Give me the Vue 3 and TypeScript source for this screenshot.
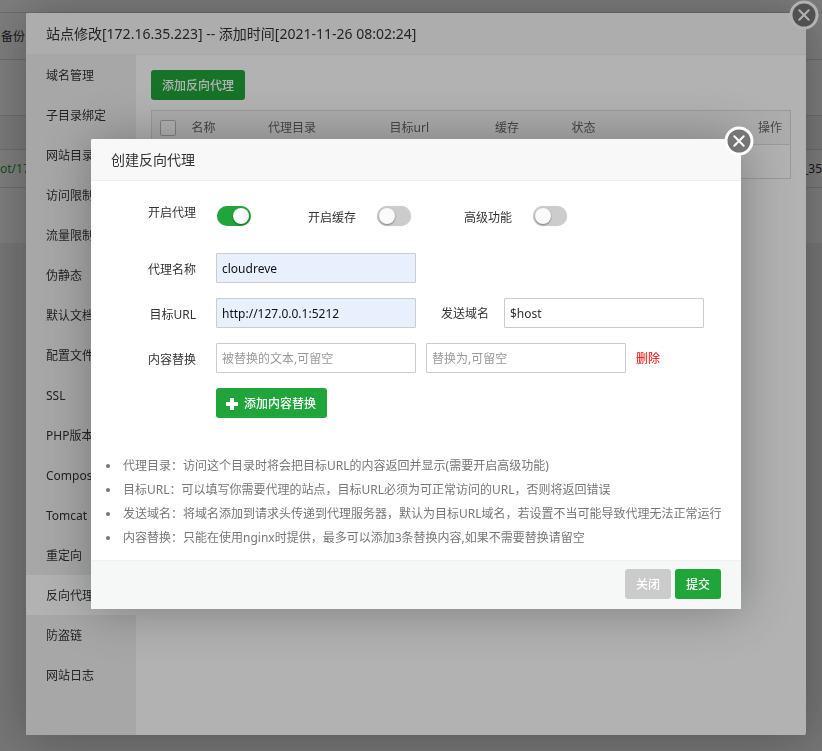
<script setup lang="ts">
import { ref } from 'vue'

const menu = ['域名管理', '子目录绑定', '网站目录', '访问限制', '流量限制', '伪静态', '默认文档', '配置文件', 'SSL', 'PHP版本', 'Composer', 'Tomcat', '重定向', '反向代理', '防盗链', '网站日志']
const active = ref('反向代理')

const enabled = ref(true)
const cache = ref(false)
const advanced = ref(false)
const name = ref('cloudreve')
const target = ref('http://127.0.0.1:5212')
const host = ref('$host')
const replaceFrom = ref('')
const replaceTo = ref('')

const help = [
  '代理目录：访问这个目录时将会把目标URL的内容返回并显示(需要开启高级功能)',
  '目标URL：可以填写你需要代理的站点，目标URL必须为可正常访问的URL，否则将返回错误',
  '发送域名：将域名添加到请求头传递到代理服务器，默认为目标URL域名，若设置不当可能导致代理无法正常运行',
  '内容替换：只能在使用nginx时提供，最多可以添加3条替换内容,如果不需要替换请留空',
]
</script>

<template>
  <div class="page">
    <div class="sheet">
      <div class="row top"></div>
      <div class="row tabs"><span>备份</span></div>
      <div class="row tools"></div>
      <div class="row head"></div>
      <div class="row site"><a href="#">ot/17</a><span>_35</span></div>
      <div class="row rest"></div>
    </div>
  </div>

  <div class="shade outer">
    <section class="dialog site-dialog">
      <h2 class="title">站点修改[172.16.35.223] -- 添加时间[2021-11-26 08:02:24]</h2>
      <button class="close" type="button" aria-label="关闭">
        <svg viewBox="0 0 30 30"><circle cx="15" cy="15" r="13" /><path d="M10.3 10.3l9.4 9.4M19.7 10.3l-9.4 9.4" /></svg>
      </button>
      <div class="split">
        <nav class="menu">
          <a v-for="item in menu" :key="item" href="#" :class="{ on: item === active }" @click.prevent="active = item">{{ item }}</a>
        </nav>
        <div class="content">
          <button class="btn" type="button">添加反向代理</button>
          <table class="list">
            <colgroup>
              <col class="c-check"><col class="c-name"><col class="c-dir"><col class="c-url"><col class="c-cache"><col class="c-state"><col>
            </colgroup>
            <thead>
              <tr>
                <th><input type="checkbox" aria-label="全选"></th>
                <th>名称</th><th>代理目录</th><th>目标url</th><th>缓存</th><th>状态</th><th class="right">操作</th>
              </tr>
            </thead>
            <tbody><tr><td colspan="7"></td></tr></tbody>
          </table>
        </div>
      </div>
    </section>
  </div>

  <div class="shade inner">
    <form class="dialog proxy-dialog" @submit.prevent>
      <h2 class="title">创建反向代理</h2>
      <button class="close" type="button" aria-label="关闭">
        <svg viewBox="0 0 30 30"><circle cx="15" cy="15" r="13" /><path d="M10.3 10.3l9.4 9.4M19.7 10.3l-9.4 9.4" /></svg>
      </button>
      <div class="form">
        <div class="line switches">
          <label class="label raised" for="enabled">开启代理</label>
          <input id="enabled" v-model="enabled" class="switch" type="checkbox">
          <label class="label" for="cache">开启缓存</label>
          <input id="cache" v-model="cache" class="switch" type="checkbox">
          <label class="label near" for="advanced">高级功能</label>
          <input id="advanced" v-model="advanced" class="switch" type="checkbox">
        </div>
        <div class="line">
          <label class="label" for="name">代理名称</label>
          <input id="name" v-model="name" class="text filled" type="text">
        </div>
        <div class="line">
          <label class="label" for="target">目标URL</label>
          <input id="target" v-model="target" class="text filled" type="text">
          <label class="label host" for="host">发送域名</label>
          <input id="host" v-model="host" class="text" type="text">
        </div>
        <div class="line">
          <label class="label" for="from">内容替换</label>
          <input id="from" v-model="replaceFrom" class="text" type="text" placeholder="被替换的文本,可留空">
          <input v-model="replaceTo" class="text second" type="text" placeholder="替换为,可留空" aria-label="替换为">
          <a class="remove" href="#">删除</a>
        </div>
        <div class="line add">
          <button class="btn" type="button">
            <svg viewBox="0 0 12 12"><path d="M6 0v12M0 6h12" /></svg>添加内容替换
          </button>
        </div>
      </div>
      <ul class="help">
        <li v-for="text in help" :key="text">{{ text }}</li>
      </ul>
      <footer class="footer">
        <button class="btn grey" type="button">关闭</button>
        <button class="btn" type="submit">提交</button>
      </footer>
    </form>
  </div>
</template>

<style>
body {
  background: #f0f0f0;
}
#app {
  font: 12px/20px "Noto Sans", "Noto Sans CJK SC", sans-serif;
  color: #333;
}
</style>

<style scoped>
* {
  box-sizing: border-box;
}
a {
  color: inherit;
  text-decoration: none;
}
button,
input {
  font: inherit;
}
.page {
  height: 100vh;
  overflow: hidden;
}
.sheet {
  background: #fff;
}
.row {
  display: flex;
  align-items: center;
  justify-content: space-between;
  border-bottom: 1px solid #ddd;
}
.row.top {
  height: 13px;
}
.row.tabs {
  height: 47px;
  padding: 2px 0 0 1px;
}
.row.tools {
  height: 56px;
}
.row.head {
  height: 34px;
  background: #f6f6f6;
}
.row.site {
  height: 38px;
}
.site a {
  color: #20a53a;
}
.row.rest {
  height: 55px;
  border-bottom: 0;
}
.shade {
  position: fixed;
  inset: 0;
  display: flex;
  justify-content: center;
  background: rgba(0, 0, 0, 0.3);
}
.outer {
  padding: 13px 16px 16px 26px;
}
.inner {
  align-items: center;
  padding: 0 0 3px 10px;
}
.dialog {
  position: relative;
  display: flex;
  flex-direction: column;
  background: #fff;
  border-radius: 2px;
  box-shadow: 1px 1px 50px rgba(0, 0, 0, 0.3);
}
.site-dialog {
  flex: 1;
}
.proxy-dialog {
  width: 650px;
  max-width: 100%;
}
.title {
  flex: none;
  height: 42px;
  margin: 0;
  padding: 0 20px;
  border-bottom: 1px solid #eee;
  border-radius: 2px 2px 0 0;
  background: #f8f8f8;
  font-size: 14px;
  font-weight: 400;
  line-height: 42px;
  white-space: nowrap;
}
.close {
  position: absolute;
  top: -13px;
  right: -13px;
  width: 30px;
  height: 30px;
  padding: 0;
  border: 0;
  background: none;
  cursor: pointer;
}
.close svg {
  display: block;
  fill: #757575;
  stroke: #fff;
  stroke-width: 3;
}
.close path {
  stroke-width: 2;
  stroke-linecap: round;
}
.split {
  flex: 1;
  display: flex;
  min-height: 0;
}
.menu {
  flex: none;
  width: 110px;
  background: #f0f0f0;
}
.menu a {
  display: block;
  padding: 2px 0 0 20px;
  line-height: 38px;
}
.menu a.on {
  background: #fff;
}
.content {
  flex: 1;
  min-width: 0;
  padding: 15px;
}
.btn {
  display: inline-flex;
  align-items: center;
  height: 30px;
  padding: 2px 11px 0 10px;
  border: 0;
  border-radius: 3px;
  background: #20a53a;
  color: #fff;
  font-weight: 500;
  cursor: pointer;
}
.content .btn,
.footer .btn {
  padding: 2px 11px 0;
}
.btn svg {
  width: 12px;
  height: 12px;
  margin-right: 6px;
  stroke: #fff;
  stroke-width: 4;
}
.btn.grey {
  background: #cbcbcb;
}
.list {
  width: 100%;
  margin-top: 10px;
  border: 1px solid #ddd;
  border-collapse: collapse;
  table-layout: fixed;
}
.list th {
  height: 34px;
  padding: 0 8px;
  border-bottom: 1px solid #ddd;
  background: #f6f6f6;
  color: #666;
  font-weight: 400;
  text-align: left;
}
.list td {
  height: 34px;
}
.list .right {
  text-align: right;
}
.list input {
  display: block;
  appearance: none;
  width: 16px;
  height: 16px;
  margin: 0;
  border: 1px solid #bbb;
  border-radius: 2px;
  background: #fff;
}
.c-check {
  width: 5%;
}
.c-name {
  width: 12%;
}
.c-dir {
  width: 19%;
}
.c-url {
  width: 16.5%;
}
.c-cache {
  width: 12%;
}
.c-state {
  width: 15%;
}
.form {
  display: flex;
  flex-direction: column;
  gap: 15px;
  padding: 20px 20px 0 0;
}
.line {
  display: flex;
  align-items: center;
  height: 30px;
}
.switches {
  margin-bottom: 7px;
}
.label {
  flex: none;
  width: 125px;
  padding: 4px 20px 0 0;
  text-align: right;
}
.label.raised {
  margin-bottom: 10px;
}
.label.near {
  width: 121px;
}
.label.host {
  width: 88px;
  padding: 2px 15px 0 0;
}
.switch {
  appearance: none;
  flex: none;
  width: 34px;
  height: 20px;
  margin: 0 0 0 1px;
  padding: 2px;
  border-radius: 10px;
  background: #ccc;
  box-shadow: 0 0 1px #ccc;
}
.switch::before {
  content: "";
  display: block;
  width: 16px;
  height: 16px;
  border-radius: 50%;
  background: #fafafa;
  box-shadow: 0 1px 2px rgba(0, 0, 0, 0.4);
}
.switch:checked {
  background: #20a53a;
}
.switch:checked::before {
  margin-left: 14px;
}
.text {
  flex: 0 1 200px;
  width: 200px;
  min-width: 0;
  height: 30px;
  padding: 0 5px;
  border: 1px solid #ccc;
  border-radius: 1px;
  outline: 0;
  background: #fff;
  color: #333;
}
.text::placeholder {
  color: #999;
}
.text.filled {
  background: #e8f0fe;
  color: #111;
}
.second {
  margin-left: 10px;
}
.remove {
  margin-left: 10px;
  padding-top: 2px;
  color: #f00;
}
.add {
  padding-left: 125px;
}
.help {
  margin: 36px 0 0;
  padding: 0 0 10px 15px;
  color: #777;
  line-height: 24px;
  list-style: none;
  white-space: nowrap;
}
.help li {
  display: flex;
  align-items: center;
  gap: 13px;
}
.help li::before {
  content: "";
  width: 4px;
  height: 4px;
  border-radius: 50%;
  background: #777;
}
.footer {
  display: flex;
  justify-content: flex-end;
  gap: 4px;
  padding: 8px 20px 10px;
  border-top: 1px solid #edf1f0;
  background: #f6f8f7;
}
</style>
